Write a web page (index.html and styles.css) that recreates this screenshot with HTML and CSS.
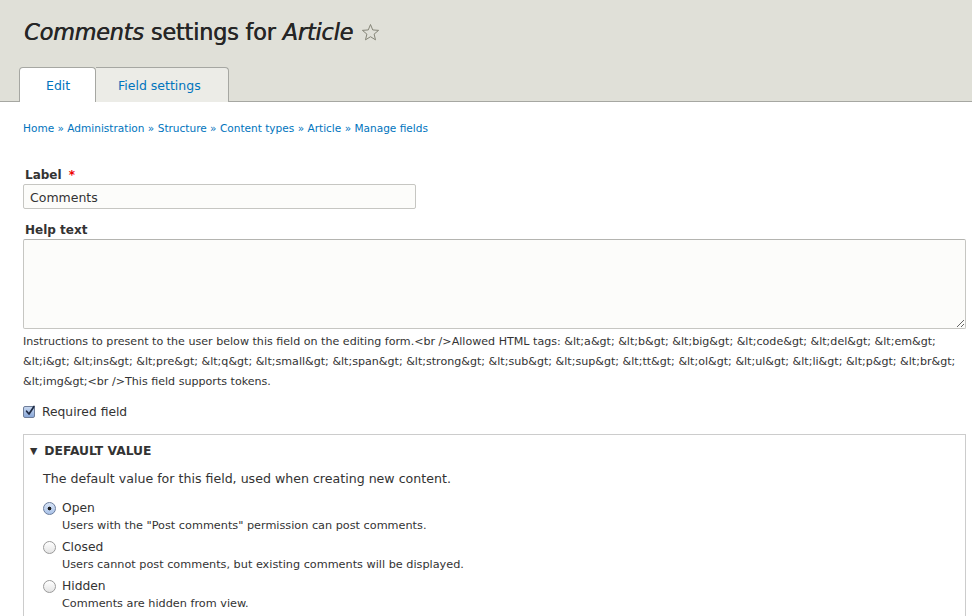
FILE: index.html
```html
<!DOCTYPE html>
<html>
<head>
<meta charset="utf-8">
<link rel="stylesheet" href="styles.css">
</head>
<body>
<header class="page-header">
  <h1 class="title"><em>Comments</em> settings for <em>Article</em><svg class="star" viewBox="0 0 20 20" width="19" height="19"><path d="M10 1.6 L12.35 7.3 L18.5 7.75 L13.8 11.7 L15.25 17.7 L10 14.45 L4.75 17.7 L6.2 11.7 L1.5 7.75 L7.65 7.3 Z" fill="none" stroke="#7f8072" stroke-width="1" stroke-linejoin="miter"/></svg></h1>
  <ul class="tabs">
    <li class="tab active"><a href="#">Edit</a></li>
    <li class="tab"><a href="#">Field settings</a></li>
  </ul>
</header>
<main class="content">
  <nav class="breadcrumb"><a href="#">Home</a> » <a href="#">Administration</a> » <a href="#">Structure</a> » <a href="#">Content types</a> » <a href="#">Article</a> » <a href="#">Manage fields</a></nav>

  <div class="form-item">
    <label class="label">Label <span class="req">*</span></label>
    <input class="text-input" type="text" value="Comments">
  </div>

  <div class="form-item help">
    <label class="label">Help text</label>
    <textarea class="textarea"></textarea>
    <div class="description">Instructions to present to the user below this field on the editing form.&lt;br /&gt;Allowed HTML tags: &amp;lt;a&amp;gt; &amp;lt;b&amp;gt; &amp;lt;big&amp;gt; &amp;lt;code&amp;gt; &amp;lt;del&amp;gt; &amp;lt;em&amp;gt; &amp;lt;i&amp;gt; &amp;lt;ins&amp;gt; &amp;lt;pre&amp;gt; &amp;lt;q&amp;gt; &amp;lt;small&amp;gt; &amp;lt;span&amp;gt; &amp;lt;strong&amp;gt; &amp;lt;sub&amp;gt; &amp;lt;sup&amp;gt; &amp;lt;tt&amp;gt; &amp;lt;ol&amp;gt; &amp;lt;ul&amp;gt; &amp;lt;li&amp;gt; &amp;lt;p&amp;gt; &amp;lt;br&amp;gt; &amp;lt;img&amp;gt;&lt;br /&gt;This field supports tokens.</div>
  </div>

  <div class="check-row">
    <span class="checkbox"><svg viewBox="0 0 12 12" width="12" height="12"><path d="M2.6 6.2 L5 9 L10 1.5" fill="none" stroke="#1d2a44" stroke-width="1.7" stroke-linecap="round" stroke-linejoin="round"/></svg></span>
    <span>Required field</span>
  </div>

  <section class="fieldset">
    <div class="legend"><span class="tri">▼</span>DEFAULT VALUE</div>
    <div class="fieldset-body">
      <p class="fs-desc">The default value for this field, used when creating new content.</p>
      <div class="radio-item">
        <div class="radio-line"><span class="radio checked"></span><span>Open</span></div>
        <div class="radio-desc">Users with the "Post comments" permission can post comments.</div>
      </div>
      <div class="radio-item">
        <div class="radio-line"><span class="radio"></span><span>Closed</span></div>
        <div class="radio-desc">Users cannot post comments, but existing comments will be displayed.</div>
      </div>
      <div class="radio-item">
        <div class="radio-line"><span class="radio"></span><span>Hidden</span></div>
        <div class="radio-desc">Comments are hidden from view.</div>
      </div>
    </div>
  </section>
</main>
</body>
</html>
```
FILE: styles.css
```css
html, body {
  margin: 0;
  padding: 0;
  background: #fff;
}
body {
  font-family: "DejaVu Sans", Verdana, sans-serif;
  color: #333;
  font-size: 12px;
  overflow: hidden;
}
.page-header {
  background: #e0e0d8;
  border-bottom: 1px solid #a6a7a2;
  height: 101px;
  padding: 0 19px;
  display: flex;
  flex-direction: column;
  justify-content: space-between;
}
.title {
  margin: 16px 0 0 5px;
  font-size: 22.3px;
  font-weight: normal;
  color: #262626;
  line-height: 32px;
  letter-spacing: -0.15px;
  text-shadow: 0.5px 0 0 #262626;
  display: flex;
  align-items: center;
}
.title em {
  font-style: italic;
}
.title em:first-child {
  margin-right: 7px;
}
.title em:last-of-type {
  margin-left: 7px;
}
.star {
  margin-left: 8px;
  margin-top: 1px;
}
.tabs {
  list-style: none;
  margin: 0 0 -1px 0;
  padding: 0;
  display: flex;
}
.tab {
  height: 35px;
  border: 1px solid #a6a7a2;
  border-bottom: 0;
  border-radius: 4px 4px 0 0;
  background: #ecece7;
  display: flex;
  align-items: center;
  box-sizing: border-box;
  width: 133px;
}
.tab + .tab {
  border-left: 0;
  border-top-left-radius: 0;
}
.tab a {
  color: #0074bd;
  text-decoration: none;
  font-size: 12.5px;
  padding: 0 0 0 22px;
}
.tab.active {
  background: #fff;
  width: 77px;
}
.tab.active a {
  padding: 0 0 0 26px;
}
.content {
  padding: 0 7px 0 23px;
}
.breadcrumb {
  font-size: 10.55px;
  color: #0074bd;
  margin-top: 19px;
  line-height: 14px;
}
.breadcrumb a {
  color: #0074bd;
  text-decoration: none;
}
.form-item {
  margin-top: 33px;
}
.form-item.help {
  margin-top: 14px;
}
.label {
  display: block;
  font-weight: bold;
  font-size: 12px;
  color: #333;
  line-height: 14px;
  padding-left: 2px;
  margin-bottom: 2px;
}
.req {
  color: #e00;
  margin-left: 3px;
}
.text-input {
  display: block;
  box-sizing: border-box;
  width: 393px;
  height: 25px;
  border: 1px solid #c6c6c2;
  border-radius: 2px;
  background: #fcfcfa;
  font-family: inherit;
  font-size: 12.5px;
  color: #333;
  padding: 1px 6px 0;
  margin: 0;
}
.textarea {
  display: block;
  box-sizing: border-box;
  width: 943px;
  height: 90px;
  border: 1px solid #c6c6c2;
  border-top-color: #b4b4b0;
  border-radius: 2px;
  background: #fcfcfa;
  margin: 0;
  font-family: inherit;
}
.description {
  font-size: 11.1px;
  line-height: 20px;
  color: #333;
  margin-top: 3px;
  width: 945px;
}
.check-row {
  margin-top: 12px;
  display: flex;
  align-items: center;
  font-size: 12.3px;
  line-height: 16px;
  color: #333;
}
.checkbox {
  width: 12px;
  height: 12px;
  box-sizing: border-box;
  border: 1px solid #6e7d99;
  border-radius: 2px;
  background: linear-gradient(#c8d8f0, #8aa8d8);
  margin: 0 7px 0 0;
  display: inline-flex;
  align-items: center;
  justify-content: center;
}
.checkbox svg {
  margin-top: -2px;
  margin-left: 1px;
  overflow: visible;
}
.fieldset {
  margin-top: 14px;
  border: 1px solid #ccc;
  border-bottom: 0;
  width: 941px;
  height: 200px;
}
.legend {
  font-weight: bold;
  font-size: 12.3px;
  color: #333;
  padding: 9px 0 0 6px;
  line-height: 14px;
}
.tri {
  font-size: 9.5px;
  margin-right: 7px;
  vertical-align: 1px;
}
.fieldset-body {
  padding-left: 19px;
}
.fs-desc {
  margin: 13px 0 0 0;
  font-size: 12.6px;
  line-height: 16px;
}
.radio-item {
  margin-top: 5px;
}
.radio-item:first-of-type {
  margin-top: 13px;
}
.radio-line {
  display: flex;
  align-items: center;
  font-size: 12.3px;
  line-height: 16px;
}
.radio {
  width: 13px;
  height: 13px;
  box-sizing: border-box;
  border-radius: 50%;
  border: 1px solid #9a9a9a;
  background: linear-gradient(#fff, #e4e4e4);
  margin-right: 6px;
}
.radio.checked {
  border-color: #6a7c9c;
  background: radial-gradient(circle, #1c1c1c 0 1.6px, transparent 2.2px), linear-gradient(#d8e4f6, #a9c2e8);
}
.radio-desc {
  font-size: 11.25px;
  line-height: 16px;
  margin-left: 19px;
  margin-top: 2px;
}
```
